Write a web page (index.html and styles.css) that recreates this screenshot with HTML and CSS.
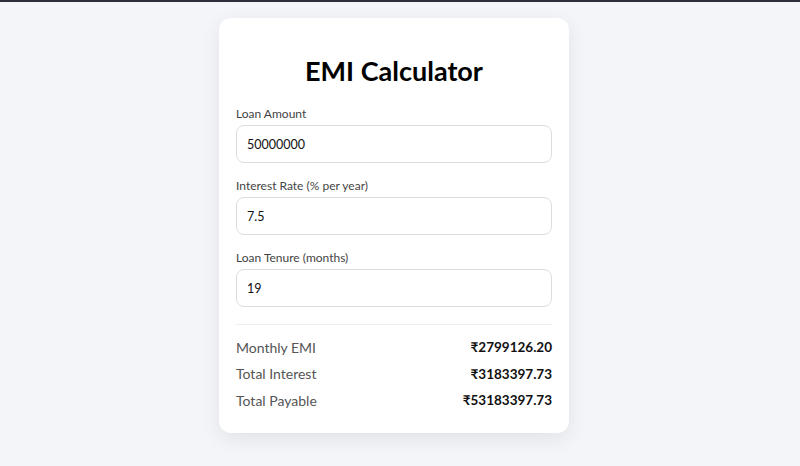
FILE: index.html
```html
<!DOCTYPE html>
<html lang="en">
<head>
<meta charset="utf-8">
<title>EMI Calculator</title>
<link rel="stylesheet" href="styles.css">
</head>
<body>
<div class="page">
  <div class="card">
    <h1 class="title">EMI Calculator</h1>
    <div class="field">
      <label class="label" for="amount">Loan Amount</label>
      <input class="input" id="amount" type="text" value="50000000">
    </div>
    <div class="field">
      <label class="label" for="rate">Interest Rate (% per year)</label>
      <input class="input" id="rate" type="text" value="7.5">
    </div>
    <div class="field">
      <label class="label" for="tenure">Loan Tenure (months)</label>
      <input class="input" id="tenure" type="text" value="19">
    </div>
    <div class="results">
      <div class="row"><span class="row-label">Monthly EMI</span><span class="row-value">₹2799126.20</span></div>
      <div class="row"><span class="row-label">Total Interest</span><span class="row-value">₹3183397.73</span></div>
      <div class="row"><span class="row-label">Total Payable</span><span class="row-value">₹53183397.73</span></div>
    </div>
  </div>
</div>
</body>
</html>
```

FILE: styles.css
```css
* { box-sizing: border-box; }
html, body { margin: 0; padding: 0; }
body {
  background: #f4f5f9;
  border-top: 2px solid #2c2e3a;
  font-family: Lato, "Noto Sans", "Liberation Sans", sans-serif;
  color: #111;
  height: 466px;
}
.page {
  display: flex;
  justify-content: center;
  padding: 16px 12px 0 0;
}
.card {
  width: 350px;
  background: #fff;
  border-radius: 12px;
  box-shadow: 0 6px 20px rgba(0, 0, 0, 0.08);
  padding: 37px 17px 19px;
}
.title {
  margin: 0 0 18px;
  text-align: center;
  font-size: 27px;
  line-height: 32px;
  font-weight: 700;
  color: #000;
}
.field { margin-bottom: 14px; }
.field:last-of-type { margin-bottom: 0; }
.label {
  display: block;
  font-size: 12px;
  line-height: 17px;
  color: #444;
  margin-bottom: 3px;
}
.input {
  display: block;
  width: 100%;
  height: 38px;
  border: 1px solid #dcdde2;
  border-radius: 8px;
  padding: 0 10px;
  font-family: inherit;
  font-size: 12.5px;
  color: #111;
  background: #fff;
  outline: none;
}
.results {
  margin-top: 17px;
  border-top: 1px solid #eeeff2;
  padding-top: 9px;
}
.row {
  display: flex;
  justify-content: space-between;
  align-items: center;
  height: 26.5px;
  font-size: 14px;
}
.row-label { color: #555; }
.row-value { font-weight: 700; font-size: 13.5px; color: #111; }
```
